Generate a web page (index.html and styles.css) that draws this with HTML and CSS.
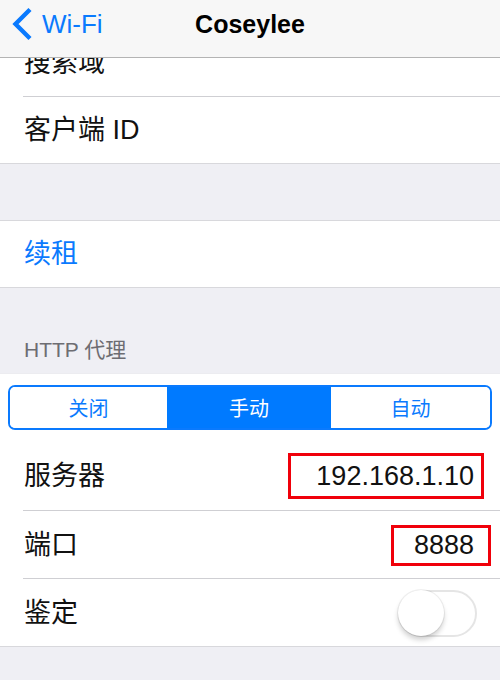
FILE: index.html
```html
<!DOCTYPE html>
<html lang="zh-CN">
<head>
<meta charset="utf-8">
<title>Coseylee</title>
<link rel="stylesheet" href="styles.css">
</head>
<body>
<div class="screen">
  <header class="nav">
    <div class="nav-back">
      <svg class="chev" width="22" height="34" viewBox="0 0 22 34" aria-hidden="true">
        <polyline points="19,2.5 4.5,17 19,31.5" fill="none" stroke="#0a7afe" stroke-width="4.4" stroke-linecap="butt" stroke-linejoin="miter"/>
      </svg>
      <span class="back-label">Wi-Fi</span>
    </div>
    <div class="nav-title">Coseylee</div>
    <div class="nav-right"></div>
  </header>

  <main class="content">
    <section class="group group-first">
      <div class="row"><span class="label">搜索域</span></div>
      <div class="row"><span class="label">客户端 ID</span></div>
    </section>

    <section class="group group-gap">
      <div class="row row-short"><span class="label link">续租</span></div>
    </section>

    <div class="group-header">HTTP 代理</div>

    <section class="group group-proxy">
      <div class="segment-wrap">
        <div class="segmented">
          <div class="seg">关闭</div>
          <div class="seg seg-on">手动</div>
          <div class="seg">自动</div>
        </div>
      </div>
      <div class="row row-tall">
        <span class="label">服务器</span>
        <span class="value box box-server">192.168.1.10</span>
      </div>
      <div class="row row-tall">
        <span class="label">端口</span>
        <span class="value box box-port">8888</span>
      </div>
      <div class="row row-tall">
        <span class="label">鉴定</span>
        <span class="toggle"><span class="knob"></span></span>
      </div>
    </section>
  </main>
</div>
</body>
</html>
```

FILE: styles.css
```css
* { box-sizing: border-box; }

html, body {
  margin: 0;
  padding: 0;
}

body {
  background: #efeff4;
  font-family: "Liberation Sans", "Noto Sans CJK SC", sans-serif;
  color: #000;
}

.screen {
  position: relative;
  width: 500px;
  height: 680px;
  overflow: hidden;
  background: #efeff4;
}

/* Navigation bar (floats over the scrolled content) */
.nav {
  position: absolute;
  top: 0;
  left: 0;
  right: 0;
  z-index: 2;
  height: 58px;
  padding-bottom: 10px;
  background: #f7f7f7;
  border-bottom: 1px solid #b4b4b4;
  display: grid;
  grid-template-columns: 1fr auto 1fr;
  align-items: center;
}

.nav-back {
  display: flex;
  align-items: center;
  padding-left: 11px;
  color: #0a7afe;
}

.chev {
  display: block;
  margin-top: 1px;
}

.back-label {
  margin-left: 9px;
  font-size: 26px;
  line-height: 30px;
}

.nav-title {
  font-size: 25px;
  font-weight: bold;
  line-height: 30px;
  text-align: center;
}

/* Content */
.content {
  padding-top: 29px;
}

.group {
  background: #fff;
  border-top: 1px solid #d8d8dc;
  border-bottom: 1px solid #d8d8dc;
}

.group-first {
  border-top: none;
}

.group-gap {
  margin-top: 56px;
}

.row {
  margin-left: 23px;
  height: 67px;
  padding-left: 1px;
  display: flex;
  align-items: center;
  justify-content: space-between;
}

.row + .row {
  border-top: 1px solid #cfcfd3;
}

.row-short {
  height: 66px;
}

.row-tall {
  height: 68px;
}

.label {
  font-size: 27px;
  line-height: 32px;
  color: #111;
}

.link {
  color: #0a7afe;
}

.group-header {
  height: 85px;
  display: flex;
  align-items: flex-end;
  padding: 0 0 11px 24px;
  font-size: 21px;
  line-height: 24px;
  color: #6d6d72;
}

.group-proxy {
  border-top-color: #ececf0;
}

/* Segmented control */
.segment-wrap {
  padding: 11px 8px 12px;
}

.segmented {
  display: grid;
  grid-template-columns: 157px 164px 1fr;
  height: 45px;
  border: 2px solid #0a7afe;
  border-radius: 7px;
  overflow: hidden;
}

.seg {
  display: flex;
  align-items: center;
  justify-content: center;
  font-size: 20px;
  color: #0a7afe;
  background: #fff;
}

.seg-on {
  background: #007aff;
  color: #fff;
}

/* Values with red annotation boxes */
.value {
  font-size: 27px;
  line-height: 32px;
  color: #111;
}

.box {
  border: 3px solid #f0000a;
  text-align: right;
  display: flex;
  align-items: center;
  justify-content: flex-end;
}

.box-server {
  width: 196px;
  height: 46px;
  padding-right: 7px;
  margin-right: 16px;
}

.box-port {
  width: 100px;
  height: 41px;
  padding-right: 14px;
  margin-right: 9px;
  margin-top: 1px;
}

/* Switch */
.toggle {
  position: relative;
  width: 79px;
  height: 47px;
  margin-right: 23px;
  margin-top: 2px;
  border: 2px solid #e5e5e5;
  border-radius: 24px;
  background: #fff;
}

.knob {
  position: absolute;
  top: -2px;
  left: -2px;
  width: 46px;
  height: 46px;
  border-radius: 50%;
  background: #fff;
  box-shadow: 0 0 0 1px rgba(0, 0, 0, 0.06), 0 4px 5px rgba(0, 0, 0, 0.18);
}
```
